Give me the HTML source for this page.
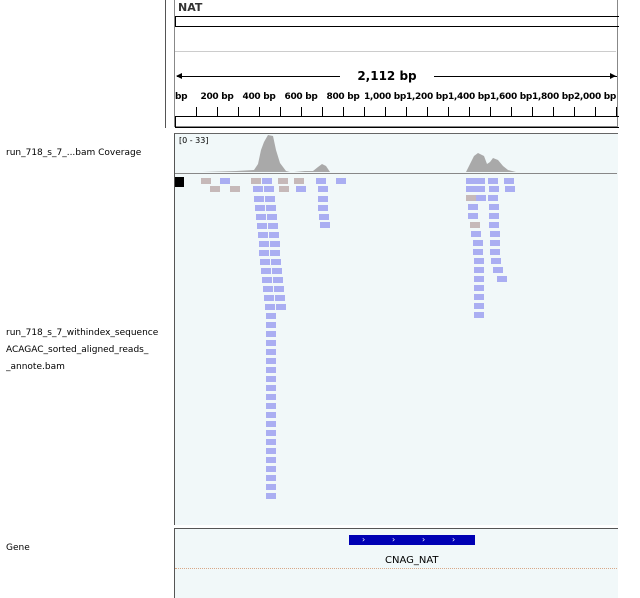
<!DOCTYPE html><html><head><style>
body{margin:0;width:640px;height:597px;background:#fff;position:relative;overflow:hidden;font-family:"DejaVu Sans","Liberation Sans",sans-serif;}
.a{position:absolute}
.r{position:absolute;width:10px;height:6px;background:#aaaef2}
.g{background:#c6b9b9}
.lbl{position:absolute;left:6px;font-size:9px;color:#000;line-height:17px}
.t{position:absolute;top:92px;width:60px;margin-left:-30px;text-align:center;font:bold 9px "DejaVu Sans",sans-serif;letter-spacing:-0.3px;white-space:nowrap}
.ch{position:absolute;top:535px;color:#fff;font-size:8px;line-height:10px}
</style></head><body>
<div class="a" style="left:165px;top:0;width:1px;height:128px;background:#555"></div>
<div class="a" style="left:174px;top:0;width:442px;height:126px;border:1px solid #888;border-top:none"></div>
<div class="a" style="left:178px;top:1px;font-size:11px;font-weight:bold;color:#333">NAT</div>
<div class="a" style="left:175px;top:16px;width:443px;height:9px;border:1px solid #000;border-right:none"></div>
<div class="a" style="left:175px;top:51px;width:441px;height:1px;background:#ccc"></div>
<div class="a" style="left:177px;top:76px;width:440px;height:1px;background:#000"></div>
<div class="a" style="left:340px;top:68px;width:94px;height:16px;background:#fff;text-align:center;font-size:12px;font-weight:bold;line-height:16px">2,112 bp</div>
<div class="a" style="left:176px;top:73px;width:0;height:0;border:3px solid transparent;border-right:6px solid #000;border-left:none"></div>
<div class="a" style="left:610px;top:73px;width:0;height:0;border:3px solid transparent;border-left:6px solid #000;border-right:none"></div>
<div id="ticks"></div>
<div class="a" style="left:175px;top:92px;width:14px;background:#fff;font:bold 9px 'DejaVu Sans',sans-serif;letter-spacing:-0.3px">bp</div>
<div class="a" style="left:175px;top:116px;width:443px;height:10px;border:1px solid #000;border-right:none"></div>
<div class="a" style="left:174px;top:133px;width:443px;height:391px;background:#f1f8f9;border-left:1px solid #555;border-top:1px solid #666"></div>
<div class="a" style="left:179px;top:136px;font-size:8px">[0 - 33]</div>
<div class="a" style="left:175px;top:173px;width:442px;height:1px;background:#888"></div>
<svg class="a" style="left:0;top:0" width="640" height="597">
<polygon fill="#a9a9a9" points="202,172 236,171 254,170 258,164 261,150 264,142 268,135 273,136 276,150 280,163 286,171 290,172"/>
<polygon fill="#a9a9a9" points="294,172 305,171 313,171 318,167 322,164 326,166 330,172"/>
<polygon fill="#a9a9a9" points="466,172 470,164 474,156 478,153 484,156 487,164 490,162 493,158 498,160 503,166 508,170 516,172"/>
<rect x="175" y="177" width="9" height="10" fill="#000"/>
</svg>
<div id="reads"></div>
<div class="a" style="left:174px;top:528px;width:443px;height:69px;background:#f1f8f9;border-left:1px solid #555;border-top:1px solid #555"></div>
<div class="a" style="left:349px;top:535px;width:126px;height:10px;background:#0000b4"></div>
<div class="ch" style="left:362px">›</div><div class="ch" style="left:392px">›</div><div class="ch" style="left:422px">›</div><div class="ch" style="left:452px">›</div>
<div class="a" style="left:385px;top:555px;font-size:10px">CNAG_NAT</div>
<div class="a" style="left:175px;top:568px;width:442px;border-top:1px dotted #d8a888"></div>
<div class="lbl" style="top:145px">run_718_s_7_...bam Coverage</div>
<div class="lbl" style="top:325px;width:158px;overflow:hidden;white-space:nowrap">run_718_s_7_withindex_sequence<br>ACAGAC_sorted_aligned_reads_<br>_annote.bam</div>
<div class="lbl" style="top:540px">Gene</div>
<script>
var t='';for(var i=0;i<21;i++){t+='<div class="a" style="left:'+(196+i*21)+'px;top:107px;width:1px;height:9px;background:#000"></div>'}
var L=['200 bp','400 bp','600 bp','800 bp','1,000 bp','1,200 bp','1,400 bp','1,600 bp','1,800 bp','2,000 bp'];
for(var j=0;j<10;j++){t+='<div class="t" style="left:'+(217+j*42)+'px">'+L[j]+'</div>'}
document.getElementById('ticks').innerHTML=t;
var h='';function r(x,y,g){h+='<div class="r'+(g?' g':'')+'" style="left:'+x+'px;top:'+y+'px"></div>'}
[[201,1],[220,0],[251,1],[262,0],[278,1],[294,1],[316,0],[336,0]].forEach(function(a){r(a[0],178,a[1])});
[[210,1],[230,1],[253,0],[264,0],[279,1],[296,0],[318,0]].forEach(function(a){r(a[0],186,a[1])});
for(var k=0;k<34;k++){var y=196+k*9;r(254+Math.min(k,13)*0.9,y);if(k<13)r(265+k*0.9,y);}
[[318,196],[318,205],[319,214],[320,222]].forEach(function(a){r(a[0],a[1])});
[[466,178],[475,178],[488,178],[504,178],[466,186],[475,186],[489,186],[505,186]].forEach(function(a){r(a[0],a[1])});
[[466,195,1],[476,195,0],[488,195,0],[468,204,0],[489,204,0],[468,213,0],[489,213,0],[470,222,1],[489,222,0],[471,231,0],[490,231,0],[473,240,0],[490,240,0],[473,249,0],[490,249,0],[474,258,0],[491,258,0],[474,267,0],[493,267,0],[474,276,0],[497,276,0],[474,285,0],[474,294,0],[474,303,0],[474,312,0]].forEach(function(a){r(a[0],a[1],a[2])});
document.getElementById('reads').innerHTML=h;
</script>
</body></html>
